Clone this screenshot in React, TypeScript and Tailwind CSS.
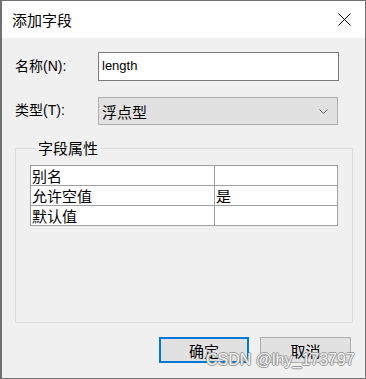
import React from "react";

const rows = [
  { name: "别名", value: "" },
  { name: "允许空值", value: "是" },
  { name: "默认值", value: "" },
];

const App = () => {
  return (
    <div
      className="relative w-[366px] h-[379px] flex flex-col border border-[#707070] border-l-2 bg-[#f0f0f0] text-black"
      style={{ fontFamily: '"Noto Sans CJK SC", "Noto Sans", sans-serif' }}
    >
      {/* title bar */}
      <div className="h-[37px] bg-white flex items-center justify-between pl-[10px] pr-[14px]">
        <span className="text-[15px] leading-none">添加字段</span>
        <svg width="13" height="13" viewBox="0 0 13 13">
          <path d="M0.5 0.5 L12.5 12.5 M12.5 0.5 L0.5 12.5" stroke="#000" strokeWidth="1" />
        </svg>
      </div>

      <div className="flex-1 flex flex-col px-[13px] pt-[14px]">
        <div className="flex items-center">
          <span className="w-[83px] text-[14px] leading-none -mt-[3px]">
            名称<span style={{ fontFamily: '"Liberation Sans", sans-serif' }}>(N):</span>
          </span>
          <div className="w-[241px] h-[29px] bg-white border border-[#7a7a7a] flex items-center pl-[3px]">
            <span className="text-[13px] leading-none -mt-[2px]" style={{ fontFamily: '"Liberation Sans", sans-serif' }}>
              length
            </span>
          </div>
        </div>

        <div className="flex items-center mt-[16px]">
          <span className="w-[83px] text-[14px] leading-none -mt-[3px]">
            类型<span style={{ fontFamily: '"Liberation Sans", sans-serif' }}>(T):</span>
          </span>
          <div className="w-[240px] h-[28px] bg-[#e1e1e1] border border-[#adadad] flex items-center justify-between pl-[3px] pr-[9px]">
            <span className="text-[15px] leading-none">浮点型</span>
            <svg width="9" height="5" viewBox="0 0 9 5">
              <path d="M0.5 0.5 L4.5 4.5 L8.5 0.5" stroke="#606060" strokeWidth="1" fill="none" />
            </svg>
          </div>
        </div>

        {/* group box */}
        <fieldset className="mt-[13px] h-[185px] border border-[#dcdcdc] pl-[14px] pr-[14px]">
          <legend className="ml-[6px] px-[2px] text-[15px] leading-[20px]">字段属性</legend>
          <table className="mt-[7px] w-[308px] border-collapse bg-white text-[15px] leading-[19px]">
            <tbody>
              {rows.map((r) => (
                <tr key={r.name} className="h-[20px]">
                  <td className="w-[184px] border border-[#a0a0a0] px-[1px] py-0">{r.name}</td>
                  <td className="border border-[#a0a0a0] px-[1px] py-0">{r.value}</td>
                </tr>
              ))}
            </tbody>
          </table>
        </fieldset>

        <div className="flex justify-end gap-[11px] mt-[14px] pr-[1px]">
          <button className="w-[90px] h-[26px] bg-[#e1e1e1] border-2 border-[#0078d7] text-[15px] leading-none">
            确定
          </button>
          <button className="w-[91px] h-[26px] bg-[#e1e1e1] border border-[#adadad] text-[15px] leading-none">
            取消
          </button>
        </div>
      </div>

      {/* watermark */}
      <span
        className="absolute left-[204px] top-[351px] text-[16px] leading-none text-[#f2f2f2] [text-shadow:1px_0_0_#9a9a9a,-1px_0_0_#9a9a9a,0_1px_0_#9a9a9a,0_-1px_0_#9a9a9a]"
        style={{ fontFamily: '"Liberation Sans", sans-serif' }}
      >
        CSDN @lhy_173797
      </span>
    </div>
  );
};

export default App;
